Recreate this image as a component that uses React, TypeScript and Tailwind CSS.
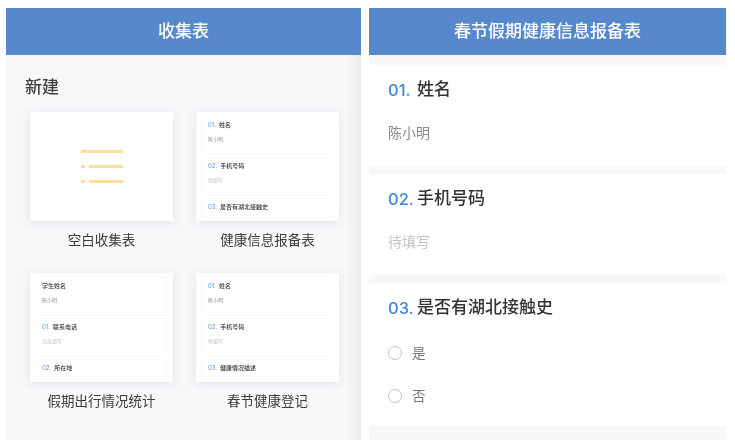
const cjk = "font-['Inter','Noto_Sans_CJK_SC',sans-serif]";

interface MiniRow {
  num?: string;
  title: string;
  hint?: string;
  hintLight?: boolean;
}

function MiniCard({ rows }: { rows: MiniRow[] }) {
  return (
    <div className="w-[143px] h-[109px] bg-white shadow-[0_2px_10px_rgba(90,100,120,0.13)] px-[5px] pt-[4px] flex flex-col gap-[2px] overflow-hidden">
      {rows.map((row, i) => (
        <div
          key={i}
          className={`${row.hint ? "h-[39px]" : "h-[20px]"} border border-[#fafafa] pl-[6px] pt-[2px] flex flex-col shrink-0`}
        >
          <div className="flex items-center h-[12px] text-[6px] leading-none font-medium text-[#333]">
            {row.num && <span className="text-[#5b94dc] mr-[3px] font-normal">{row.num}</span>}
            <span>{row.title}</span>
          </div>
          {row.hint && (
            <div className={`mt-[6px] text-[5px] leading-none ${row.hintLight ? "text-[#bbb]" : "text-[#888]"}`}>
              {row.hint}
            </div>
          )}
        </div>
      ))}
    </div>
  );
}

function BlankCard() {
  return (
    <div className="w-[143px] h-[109px] bg-white shadow-[0_2px_10px_rgba(90,100,120,0.13)] flex flex-col items-center justify-center gap-[12px] pb-[1px]">
      <div className="w-[42px] h-[3px] bg-[#fbdf9f]" />
      <div className="w-[42px] h-[3px] flex gap-[4px]">
        <div className="w-[4px] bg-[#fbdf9f]" />
        <div className="flex-1 bg-[#fbdf9f]" />
      </div>
      <div className="w-[42px] h-[3px] flex gap-[4px]">
        <div className="w-[4px] bg-[#fbdf9f]" />
        <div className="flex-1 bg-[#fbdf9f]" />
      </div>
    </div>
  );
}

function Template({ label, children }: { label: string; children: React.ReactNode }) {
  return (
    <div className="flex flex-col items-center">
      {children}
      <div className="mt-[9px] h-[20px] leading-[20px] text-[13.5px] text-[#3c3c3c]">{label}</div>
    </div>
  );
}

function Header({ title }: { title: string }) {
  return (
    <div className="h-[47px] bg-[#5788cb] flex items-center justify-center text-white text-[17px] font-medium">
      {title}
    </div>
  );
}

function Question({ num, title, children, height }: { num: string; title: string; children: React.ReactNode; height: string }) {
  return (
    <div className={`${height} bg-white pl-[19px] pt-[13px]`}>
      <div className="flex items-center h-[24px] text-[16.5px] font-medium text-[#333]">
        <span className="text-[#3d86dd] mr-[4px] w-[25px]">{num}</span>
        <span className="text-[17px]">{title}</span>
      </div>
      {children}
    </div>
  );
}

function Radio({ label }: { label: string }) {
  return (
    <div className="flex items-center h-[20px] text-[13.5px] text-[#777]">
      <div className="w-[14px] h-[14px] rounded-full border border-[#c4c4c4] mr-[10px]" />
      {label}
    </div>
  );
}

export default function App() {
  return (
    <div className={`w-[735px] h-[448px] bg-white flex pl-[6px] pt-[8px] gap-[8px] overflow-hidden blur-[0.4px] ${cjk}`}>
      <div className="w-[355px] h-[432px] bg-[#f6f8fa] flex flex-col relative">
        <Header title="收集表" />
        <div className="absolute right-0 top-[47px] bottom-0 w-[16px] bg-gradient-to-r from-transparent to-[#e9ebee]" />
        <div className="pl-[19px] pt-[20px] h-[24px] box-content text-[17px] leading-[24px] font-medium text-[#3f3f3f]">新建</div>
        <div className="grid grid-cols-[143px_143px] gap-x-[23px] gap-y-[23px] pl-[24px] pt-[13px] relative">
          <Template label="空白收集表">
            <BlankCard />
          </Template>
          <Template label="健康信息报备表">
            <MiniCard
              rows={[
                { num: "01.", title: "姓名", hint: "陈小明" },
                { num: "02.", title: "手机号码", hint: "待填写", hintLight: true },
                { num: "03.", title: "是否有湖北接触史" },
              ]}
            />
          </Template>
          <Template label="假期出行情况统计">
            <MiniCard
              rows={[
                { title: "学生姓名", hint: "陈小明" },
                { num: "01.", title: "联系电话", hint: "点击填写", hintLight: true },
                { num: "02.", title: "所在地" },
              ]}
            />
          </Template>
          <Template label="春节健康登记">
            <MiniCard
              rows={[
                { num: "01.", title: "姓名", hint: "陈小明" },
                { num: "02.", title: "手机号码", hint: "待填写", hintLight: true },
                { num: "03.", title: "健康情况描述" },
              ]}
            />
          </Template>
        </div>
      </div>
      <div className="w-[357px] h-[432px] bg-[#f5f7f9] flex flex-col">
        <Header title="春节假期健康信息报备表" />
        <div className="h-[10px] shrink-0" />
        <Question num="01." title="姓名" height="h-[101px]">
          <div className="mt-[21px] text-[14px] leading-[20px] text-[#8a8a8a]">陈小明</div>
        </Question>
        <div className="h-[8px] shrink-0" />
        <Question num="02." title="手机号码" height="h-[101px]">
          <div className="mt-[21px] text-[14px] leading-[20px] text-[#c4c4c4]">待填写</div>
        </Question>
        <div className="h-[8px] shrink-0" />
        <Question num="03." title="是否有湖北接触史" height="h-[143px]">
          <div className="mt-[23px] flex flex-col gap-[23px]">
            <Radio label="是" />
            <Radio label="否" />
          </div>
        </Question>
      </div>
    </div>
  );
}
